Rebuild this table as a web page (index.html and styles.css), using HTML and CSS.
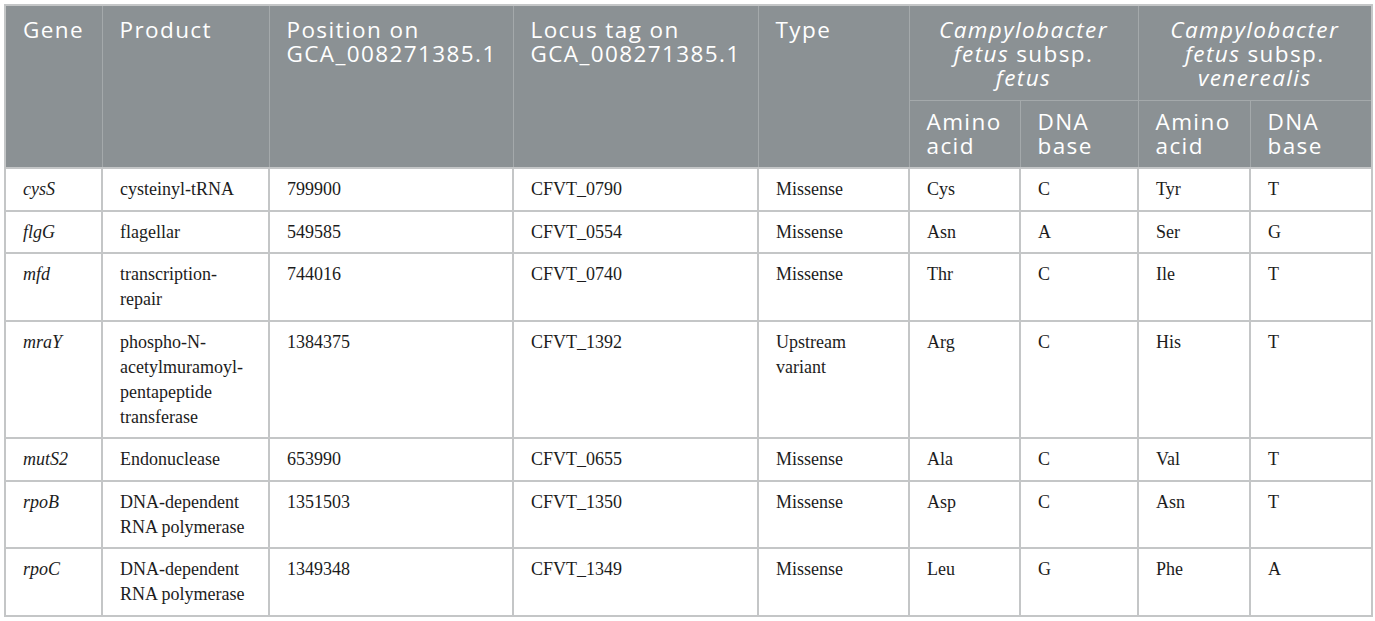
FILE: index.html
```html
<!DOCTYPE html>
<html>
<head>
<meta charset="utf-8">
<link rel="stylesheet" href="styles.css">
</head>
<body>
<div class="wrap">
<table class="snp">
<colgroup>
<col class="c-gene"><col class="c-prod"><col class="c-pos"><col class="c-locus"><col class="c-type">
<col class="c-aa1"><col class="c-dna1"><col class="c-aa2"><col class="c-dna2">
</colgroup>
<thead>
<tr class="h-top">
<th rowspan="2">Gene</th>
<th rowspan="2">Product</th>
<th rowspan="2">Position on GCA_008271385.1</th>
<th rowspan="2">Locus tag on GCA_008271385.1</th>
<th rowspan="2">Type</th>
<th colspan="2" class="grp"><i>Campylobacter fetus</i> subsp. <i>fetus</i></th>
<th colspan="2" class="grp"><i>Campylobacter fetus</i> subsp. <i>venerealis</i></th>
</tr>
<tr class="h-sub">
<th>Amino acid</th>
<th>DNA base</th>
<th>Amino acid</th>
<th>DNA base</th>
</tr>
</thead>
<tbody>
<tr><td><i>cysS</i></td><td>cysteinyl-tRNA</td><td>799900</td><td>CFVT_0790</td><td>Missense</td><td>Cys</td><td>C</td><td>Tyr</td><td>T</td></tr>
<tr><td><i>flgG</i></td><td>flagellar</td><td>549585</td><td>CFVT_0554</td><td>Missense</td><td>Asn</td><td>A</td><td>Ser</td><td>G</td></tr>
<tr><td><i>mfd</i></td><td>transcription-repair</td><td>744016</td><td>CFVT_0740</td><td>Missense</td><td>Thr</td><td>C</td><td>Ile</td><td>T</td></tr>
<tr><td><i>mraY</i></td><td>phospho-N-acetylmuramoyl-pentapeptide transferase</td><td>1384375</td><td>CFVT_1392</td><td>Upstream variant</td><td>Arg</td><td>C</td><td>His</td><td>T</td></tr>
<tr><td><i>mutS2</i></td><td>Endonuclease</td><td>653990</td><td>CFVT_0655</td><td>Missense</td><td>Ala</td><td>C</td><td>Val</td><td>T</td></tr>
<tr><td><i>rpoB</i></td><td>DNA-dependent RNA polymerase</td><td>1351503</td><td>CFVT_1350</td><td>Missense</td><td>Asp</td><td>C</td><td>Asn</td><td>T</td></tr>
<tr><td><i>rpoC</i></td><td>DNA-dependent RNA polymerase</td><td>1349348</td><td>CFVT_1349</td><td>Missense</td><td>Leu</td><td>G</td><td>Phe</td><td>A</td></tr>
</tbody>
</table>
</div>
</body>
</html>
```

FILE: styles.css
```css
html, body {
  margin: 0;
  padding: 0;
  background: #ffffff;
}

.wrap {
  padding: 4px;
}

.snp {
  width: 1367px;
  border-collapse: collapse;
  table-layout: fixed;
  border: 2px solid #c4c6c7;
}

.c-gene { width: 97px; }
.c-prod { width: 167px; }
.c-pos { width: 244px; }
.c-locus { width: 245px; }
.c-type { width: 151px; }
.c-aa1 { width: 111px; }
.c-dna1 { width: 118px; }
.c-aa2 { width: 112px; }
.c-dna2 { width: 122px; }

.snp th {
  background: #8b9194;
  color: #ffffff;
  font-family: "Open Sans", Lato, sans-serif;
  font-weight: 400;
  font-size: 22.5px;
  letter-spacing: 1.4px;
  line-height: 24px;
  text-align: left;
  vertical-align: top;
  padding: 12px 8px 10px 17px;
  border: 1px solid #a4a9ab;
}

.snp th.grp {
  text-align: center;
  padding: 12px 24px 10px 24px;
}

.h-sub th {
  padding: 9px 8px 9px 17px;
}

.snp thead tr:first-child th {
  border-top: 2px solid #c4c6c7;
}

.snp td {
  font-family: "Liberation Serif", "Times New Roman", serif;
  font-size: 18px;
  line-height: 25px;
  color: #1c1c1c;
  vertical-align: top;
  padding: 8px 10px 7.5px 17px;
  border: 2px solid #c4c6c7;
}
```
